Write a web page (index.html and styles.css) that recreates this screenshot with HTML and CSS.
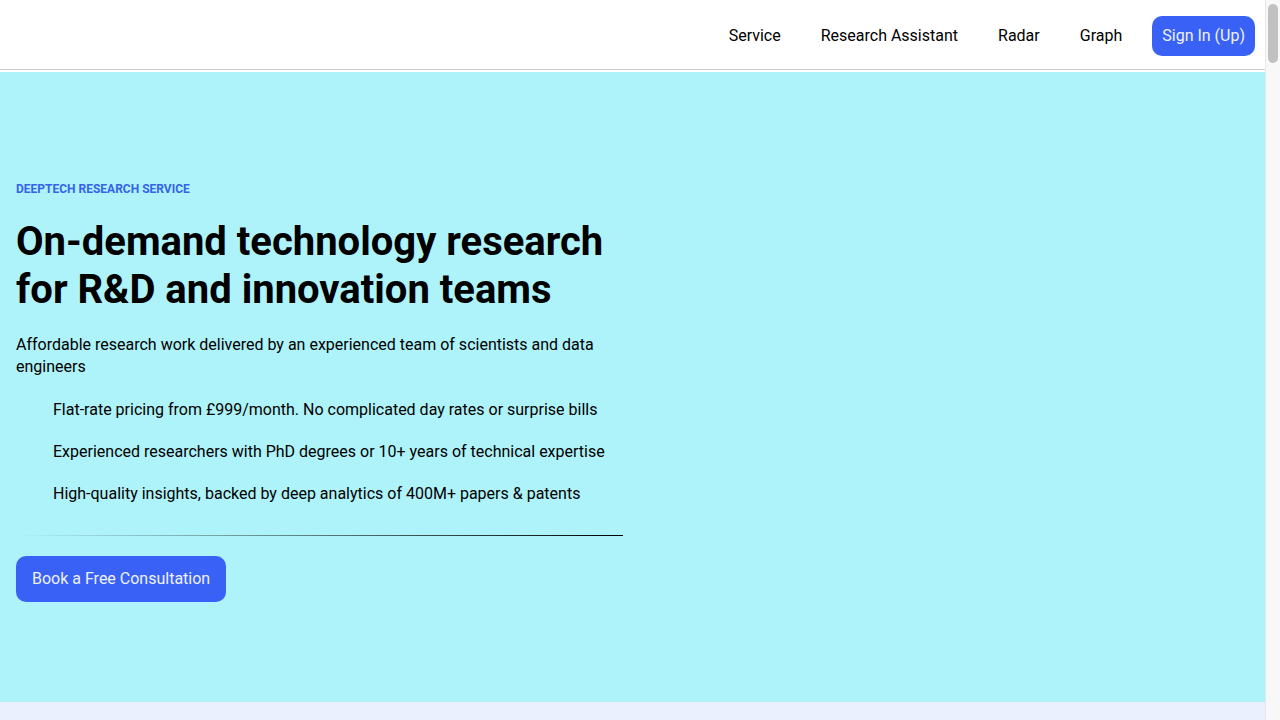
FILE: index.html
```html
<!DOCTYPE html>
<html lang="en">

<head>
    <meta charset="UTF-8">
    <meta name="viewport" content="width=device-width, initial-scale=1.0">
    <title>DeepTech Research Service</title>
    <link rel="stylesheet" href="styles.css">
</head>

<body>
    <div class="pagina">
        <header class="cabecera">
            <nav class="menu">
                <a href="#" class="enlace">Service</a>
                <a href="#" class="enlace">Research Assistant</a>
                <a href="#" class="enlace">Radar</a>
                <a href="#" class="enlace">Graph</a>
                <a href="#" class="boton-entrar">Sign In (Up)</a>
            </nav>
        </header>

        <section class="portada">
            <div class="portada-texto">
                <p class="etiqueta">DeepTech Research Service</p>
                <h1 class="titulo">On-demand technology research for R&amp;D and innovation teams</h1>
                <p class="descripcion">Affordable research work delivered by an experienced team of scientists and data engineers</p>
                <ul class="ventajas">
                    <li>Flat-rate pricing from £999/month. No complicated day rates or surprise bills</li>
                    <li>Experienced researchers with PhD degrees or 10+ years of technical expertise</li>
                    <li>High-quality insights, backed by deep analytics of 400M+ papers &amp; patents</li>
                </ul>
                <hr class="separador">
                <a href="#" class="boton-cita">Book a Free Consultation</a>
            </div>
            <div class="portada-lado"></div>
        </section>

        <section class="resto"></section>
    </div>

    <!-- barra de desplazamiento de la pagina -->
    <div class="barra">
        <div class="barra-mango"></div>
    </div>
</body>

</html>
```

FILE: styles.css
```css
* {
    box-sizing: border-box;
    margin: 0;
    padding: 0;
    font-family: Roboto, "Liberation Sans", Arial, sans-serif;
}

body {
    display: flex;
    height: 100vh;
    overflow: hidden;
    background-color: #eaf0fe;
    color: #000;
}

.pagina {
    flex: 1;
    min-width: 0;
    overflow: hidden;
}

.barra {
    width: 15px;
    flex-shrink: 0;
    background-color: #f8f8f8;
    border-left: 1px solid #e8e8e8;
    padding: 4px 2px 0 2px;
}

.barra-mango {
    height: 59px;
    background-color: #c1c1c1;
    border-radius: 5px;
}

a {
    text-decoration: none;
}

.cabecera {
    background-color: #fff;
    padding-bottom: 2px;
}

.menu {
    height: 70px;
    display: flex;
    justify-content: flex-end;
    align-items: center;
    padding: 3px 10px 0 0;
    border-bottom: 1px solid #cfcfcf;
}

.enlace {
    color: #000;
    font-size: 16px;
    line-height: 22px;
    padding: 0 20px;
    margin-top: -1px;
}

.boton-entrar {
    margin-left: 10px;
    padding: 9px 10px;
    font-size: 16px;
    line-height: 22px;
    color: #eef2ff;
    background-color: #3961f5;
    border-radius: 10px;
}

.portada {
    height: 630px;
    background-color: #aef3f9;
    display: grid;
    grid-template-columns: 607px 1fr;
    gap: 16px;
    padding: 0 16px;
}

.portada-texto {
    display: flex;
    flex-direction: column;
    justify-content: center;
    align-items: flex-start;
    padding-top: 10px;
}

.etiqueta {
    font-size: 12px;
    font-weight: 700;
    line-height: 14px;
    text-transform: uppercase;
    color: #3563e9;
    margin-bottom: 22px;
}

.titulo {
    font-size: 40px;
    font-weight: 700;
    line-height: 48px;
    margin-bottom: 20px;
}

.descripcion {
    font-size: 16px;
    line-height: 22px;
    margin-bottom: 21px;
}

.ventajas {
    list-style: none;
    padding-left: 37px;
}

.ventajas li {
    font-size: 16px;
    line-height: 22px;
    margin-bottom: 20px;
}

.ventajas li:last-child {
    margin-bottom: 0;
}

.separador {
    width: 100%;
    height: 1px;
    border: none;
    margin: 30px 0 20px;
    background: linear-gradient(to right, rgba(0, 0, 0, 0), #000);
}

.boton-cita {
    display: inline-block;
    padding: 12px 16px;
    font-size: 16px;
    line-height: 22px;
    color: #eef2ff;
    background-color: #3961f5;
    border-radius: 10px;
}

.resto {
    height: 400px;
}
```
